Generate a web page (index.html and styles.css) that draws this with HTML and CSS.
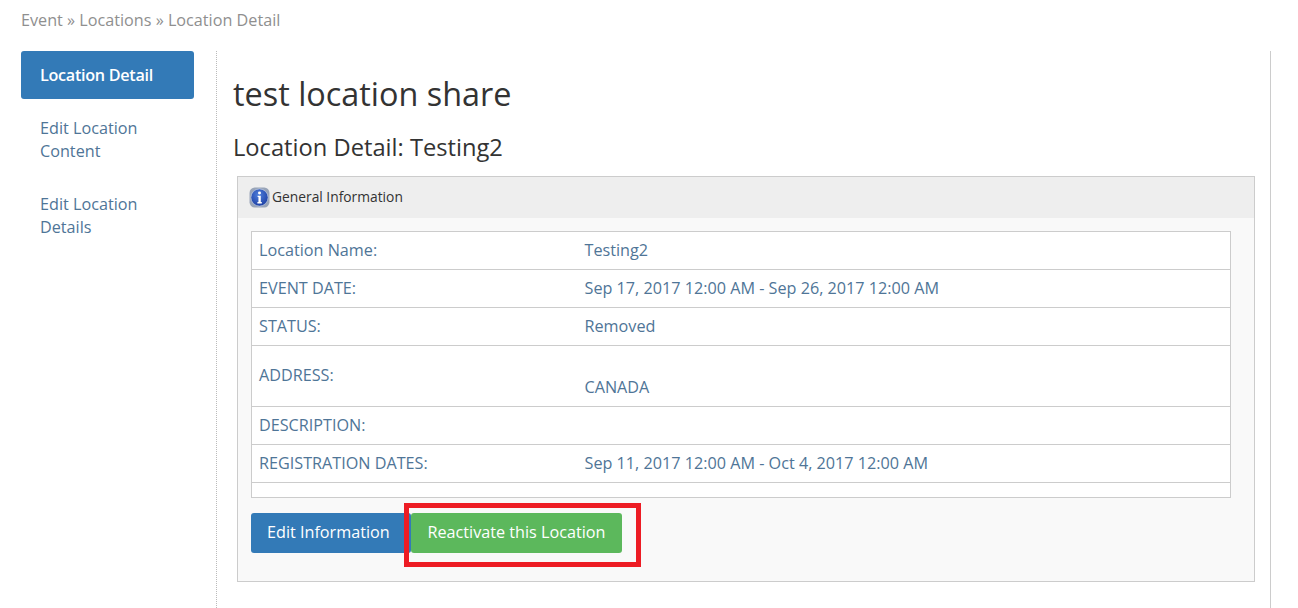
FILE: index.html
```html
<!DOCTYPE html>
<html lang="en">
<head>
<meta charset="utf-8">
<title>Location Detail</title>
<link rel="stylesheet" href="styles.css">
</head>
<body>
<div class="breadcrumb">Event » Locations » Location Detail</div>
<div class="layout">
  <nav class="sidenav">
    <a class="navitem active" href="#">Location Detail</a>
    <a class="navitem" href="#">Edit Location Content</a>
    <a class="navitem" href="#">Edit Location Details</a>
  </nav>
  <main class="content">
    <h1 class="title">test location share</h1>
    <h2 class="subtitle">Location Detail: Testing2</h2>
    <section class="panel">
      <header class="panel-head">
        <svg class="info" width="21" height="21" viewBox="0 0 20 20" aria-hidden="true">
          <defs>
            <radialGradient id="g" cx="45%" cy="35%" r="70%">
              <stop offset="0" stop-color="#4f80dc"/>
              <stop offset="1" stop-color="#1a3ba0"/>
            </radialGradient>
          </defs>
          <rect x="0.5" y="0.5" width="19" height="19" rx="5" fill="#98a4b8"/>
          <circle cx="10" cy="10" r="8.2" fill="url(#g)" stroke="#c9d5ea" stroke-width="0.6"/>
          <circle cx="10" cy="5.8" r="1.4" fill="#fff"/>
          <path d="M8.2 8.4h3v6h1v1.2H8v-1.2h1v-4.8h-.8z" fill="#fff"/>
        </svg>
        <span class="panel-title">General Information</span>
      </header>
      <div class="panel-body">
        <table class="details">
          <tr><td class="lbl">Location Name:</td><td>Testing2</td></tr>
          <tr><td class="lbl">EVENT DATE:</td><td>Sep 17, 2017 12:00 AM - Sep 26, 2017 12:00 AM</td></tr>
          <tr><td class="lbl">STATUS:</td><td>Removed</td></tr>
          <tr><td class="lbl lbl-addr">ADDRESS:</td><td class="addr"><br>CANADA</td></tr>
          <tr><td class="lbl">DESCRIPTION:</td><td></td></tr>
          <tr><td class="lbl">REGISTRATION DATES:</td><td>Sep 11, 2017 12:00 AM - Oct 4, 2017 12:00 AM</td></tr>
          <tr class="empty"><td></td><td></td></tr>
        </table>
        <div class="actions">
          <a class="btn btn-blue" href="#">Edit Information</a>
          <span class="highlight-wrap">
            <a class="btn btn-green" href="#">Reactivate this Location</a>
            <span class="highlight"></span>
          </span>
        </div>
      </div>
    </section>
  </main>
</div>
</body>
</html>
```

FILE: styles.css
```css
* { box-sizing: border-box; }
html, body { margin: 0; height: 100%; }
body {
  font-family: "Open Sans", "Noto Sans", sans-serif;
  font-size: 16.2px;
  line-height: 23px;
  color: #333;
  background: #fff;
  padding: 9px 27px 0 21px;
  overflow: hidden;
}
a { text-decoration: none; }

.breadcrumb { color: #8f8f8f; height: 42px; }

.layout { display: flex; height: 557px; }

.sidenav {
  width: 173px;
  flex: none;
  margin-right: 22px;
  display: flex;
  flex-direction: column;
  gap: 6px;
}
.navitem {
  display: block;
  padding: 12px 19px;
  color: #4f7597;
  border-radius: 3px;
}
.navitem.active {
  background: #337ab7;
  color: #fff;
  font-weight: 600;
  letter-spacing: -0.3px;
  height: 48px;
  padding-top: 13px;
}

.content {
  flex: 1;
  border-left: 1px dotted #bbb;
  border-right: 1px solid #ccc;
  padding: 0 15px 0 16px;
}
.title {
  margin: 20px 0 0;
  font-size: 32.4px;
  line-height: 44px;
  font-weight: 400;
  color: #333;
}
.subtitle {
  margin: 16px 0 0;
  font-size: 23.7px;
  line-height: 32px;
  font-weight: 400;
  color: #333;
}
.panel {
  margin: 13px 0 0 4px;
  height: 406px;
  border: 1px solid #ccc;
  background: #f9f9f9;
}
.panel-head {
  display: flex;
  align-items: center;
  gap: 2px;
  height: 41px;
  padding: 0 0 0 11px;
  background: #eee;
  color: #333;
  font-size: 13.8px;
}
.panel-title { margin-bottom: 2px; }
.info { flex: none; }
.panel-body { padding: 13px 23px 0 13px; }

.details {
  width: 100%;
  border-collapse: collapse;
  background: #fff;
  border: 1px solid #ccc;
  color: #4f7597;
  table-layout: fixed;
}
.details tr { border-bottom: 1px solid #ccc; }
.details td { padding: 7px; vertical-align: middle; height: 38px; }
.details .lbl { width: 326px; }
.details .lbl-addr { padding-bottom: 9px; }
.details td.addr { height: 61px; }
.details tr.empty { border-bottom: 0; }
.details tr.empty td { height: 15px; padding: 0; }

.actions { display: flex; margin-top: 15px; }
.btn {
  display: block;
  height: 40px;
  line-height: 38px;
  border-radius: 3px;
  color: #fff;
}
.btn-blue { background: #337ab7; width: 160px; padding-left: 16px; }
.btn-green { background: #5cb85c; width: 211px; text-align: center; }
.highlight-wrap { position: relative; display: block; }
.highlight {
  position: absolute;
  left: -7px;
  top: -10px;
  width: 237px;
  height: 64px;
  border: 5px solid #ed1c24;
}
```
